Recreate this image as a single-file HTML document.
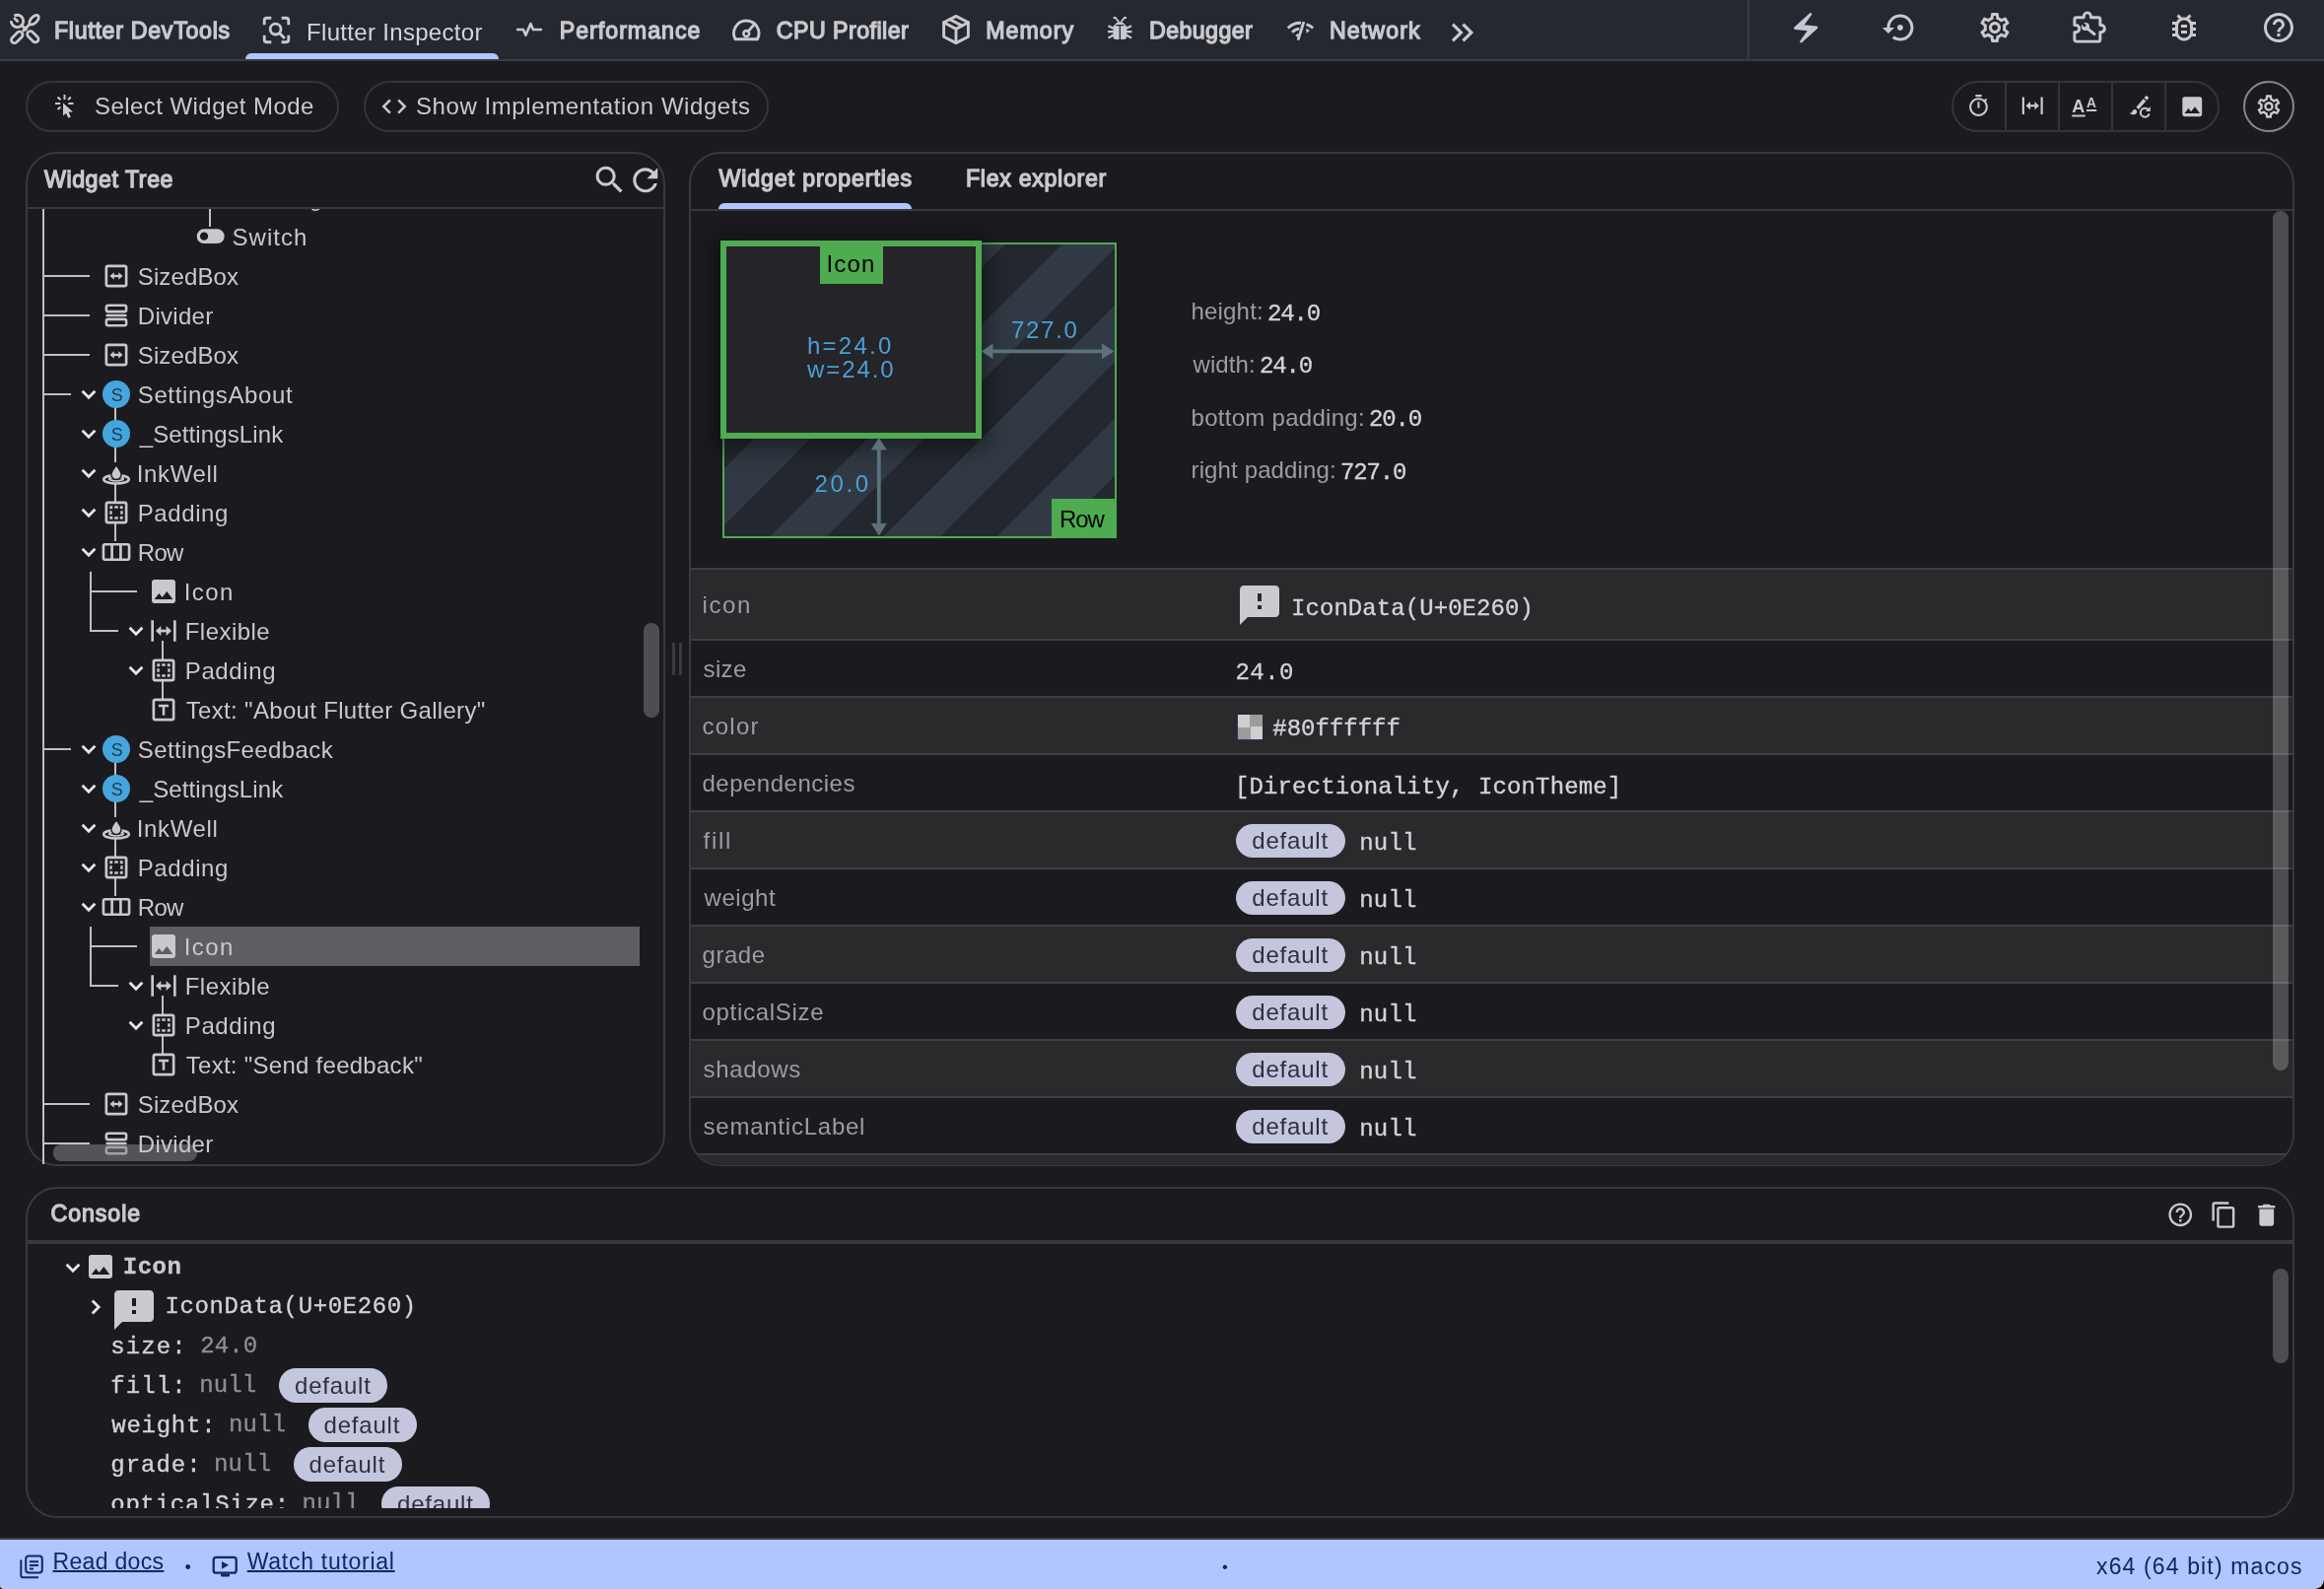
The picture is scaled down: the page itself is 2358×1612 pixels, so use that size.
<!DOCTYPE html>
<html lang="en"><head><meta charset="utf-8"><title>Flutter DevTools</title><style>
html,body{margin:0;padding:0;background:#000}
#bg{position:absolute;left:0;top:0;width:2358px;height:1612px;background:#1b1b1f;border-radius:0 0 9px 3px}
body{width:2358px;height:1612px;position:relative;overflow:hidden;font-family:"Liberation Sans", sans-serif;font-size:24px;color:#cac9ce}
#root{position:absolute;left:0;top:0;width:2358px;height:1612px;overflow:hidden;border-radius:0 0 9px 3px;will-change:transform}
.a{position:absolute}
.ic{position:absolute;overflow:visible}
.t{position:absolute;white-space:pre;line-height:24px}
.m{font-family:"Liberation Mono",monospace;-webkit-text-stroke:0.35px}
.S{width:28px;height:28px;border-radius:14px;background:#45a5dc}
</style></head><body><div id="bg"></div><div id="root"><header id="appbar"><div class="a" style="left:0px;top:0px;width:2358px;height:60px;background:#262830;"></div><div class="a" style="left:0px;top:60px;width:2358px;height:2px;background:#3a3b40;"></div><svg class="ic" style="left:8.5px;top:13.4px" width="33" height="33" viewBox="0 0 24 24"><circle cx="6.200" cy="6.100" r="4.500" fill="none" stroke="#cac9ce" stroke-width="2.100" stroke-dasharray="24 4.270" stroke-dashoffset="-18.300"/><path fill="none" stroke="#cac9ce" stroke-width="2" stroke-linecap="round" stroke-linejoin="miter" d="M6.300 6.200L4.300 4.200"/><path fill="none" stroke="#cac9ce" stroke-width="2.1" stroke-linecap="butt" stroke-linejoin="miter" d="M9.300 9l3.900 3.900"/><rect x="12.800" y="15.300" width="9.800" height="4.600" rx="2.300" fill="none" stroke="#cac9ce" stroke-width="2" transform="rotate(45 17.700 17.600)"/><ellipse cx="18.600" cy="5.200" rx="4.300" ry="2.300" fill="none" stroke="#cac9ce" stroke-width="2" transform="rotate(-45 18.600 5.200)"/><path fill="none" stroke="#cac9ce" stroke-width="2.1" stroke-linecap="butt" stroke-linejoin="miter" d="M15.600 8.200l-5.400 5.400"/><rect x="1" y="15.800" width="10" height="4.600" rx="2.300" fill="none" stroke="#cac9ce" stroke-width="2" transform="rotate(-45 6 18.100)"/></svg><div class="a" style="left:249px;top:54px;width:257px;height:6px;background:#b1c5ff;border-radius:6px 6px 0 0;"></div><svg class="ic" style="left:265px;top:14.7px" width="31" height="31" viewBox="0 0 24 24"><path fill="none" stroke="#cac9ce" stroke-width="2.2" stroke-linecap="butt" stroke-linejoin="miter" d="M2.500 8V4.500c0-1.100.900-2 2-2H8M16 2.500h3.500c1.100 0 2 .900 2 2V8M21.500 16v3.500c0 1.100-.900 2-2 2H16M8 21.500H4.500c-1.100 0-2-.900-2-2V16"/><circle cx="11.300" cy="11.300" r="4.200" fill="none" stroke="#cac9ce" stroke-width="2.200"/><path fill="none" stroke="#cac9ce" stroke-width="2.2" stroke-linecap="butt" stroke-linejoin="miter" d="M14.300 14.300l4.200 4.200"/></svg><svg class="ic" style="left:524.4px;top:16.6px" width="26" height="26" viewBox="0 0 24 24"><path fill="none" stroke="#cac9ce" stroke-width="2.4" stroke-linecap="round" stroke-linejoin="round" d="M1 12h5.400l2.300 5.300 4.600-10.800 2.300 5.500H23"/></svg><svg class="ic" style="left:742.45px;top:14.75px" width="30.5" height="30.5" viewBox="0 0 24 24"><path fill="none" stroke="#cac9ce" stroke-width="2.3" stroke-linecap="round" stroke-linejoin="round" d="M3.200 19.500a10 10 0 1 1 17.600 0z"/><circle cx="12" cy="15" r="2.300" fill="none" stroke="#cac9ce" stroke-width="2"/><path fill="none" stroke="#cac9ce" stroke-width="2.3" stroke-linecap="round" stroke-linejoin="miter" d="M13.500 13.300l3.800-4.600"/></svg><svg class="ic" style="left:953.5px;top:14.3px" width="32" height="32" viewBox="0 0 24 24"><path fill="none" stroke="#cac9ce" stroke-width="2.2" stroke-linecap="round" stroke-linejoin="round" d="M12 1.800l9.300 4.800v10.800L12 22.200l-9.300-4.800V6.600z"/><path fill="none" stroke="#cac9ce" stroke-width="2.2" stroke-linecap="round" stroke-linejoin="round" d="M2.700 6.600L12 11.500l9.300-4.900M12 11.500v10.700M7.300 4.200l9.400 4.900"/></svg><svg class="ic" style="left:1124px;top:16.8px" width="24" height="24" viewBox="0 0 24 24"><path fill="#cac9ce" d="M9 6.100h6.600l3.700 4v9.800c0 1.700-1.300 3-3 3H8.300c-1.700 0-3-1.300-3-3V10.100z"/><path fill="none" stroke="#cac9ce" stroke-width="1.8" stroke-linecap="butt" stroke-linejoin="miter" d="M7.800 1l3.800 5M16.800 1L13 6M5.600 1h2.800M16.200 1H19"/><path fill="none" stroke="#cac9ce" stroke-width="2.2" stroke-linecap="butt" stroke-linejoin="miter" d="M5.600 11.700L.500 9.200M5.600 15.200H0M5.600 18.500L.500 21.600M19 11.700l5-2.500M19 15.200h5.400M19 18.500l5 3.100"/><path stroke="#262830" stroke-width="1.300" d="M12.300 9.300v14M8.300 8.700h8" fill="none"/></svg><svg class="ic" style="left:1304.5px;top:16.5px" width="29" height="29" viewBox="0 0 24 24"><path fill="none" stroke="#cac9ce" stroke-width="2.3" stroke-linecap="butt" stroke-linejoin="miter" d="M1.500 9.500C4.500 6.300 8.500 5 12.500 5.200M5 13c1.700-1.800 3.800-2.800 6-3M8.600 16.500c.500-.600 1.100-1 1.800-1.300"/><path fill="none" stroke="#cac9ce" stroke-width="2.3" stroke-linecap="butt" stroke-linejoin="miter" d="M14.800 4.200L10 19.500"/><path fill="none" stroke="#cac9ce" stroke-width="2.3" stroke-linecap="butt" stroke-linejoin="miter" d="M17 6.300c2.100.700 4 1.800 5.500 3.200"/><path fill="#cac9ce" d="M16.800 9.800l3 1.700-2.800 2.300z"/></svg><svg class="ic" style="left:1464.5px;top:13.5px" width="38" height="38" viewBox="0 0 24 24"><path fill="#cac9ce" d="M6.41 6L5 7.41 9.58 12 5 16.59 6.410 18l6-6z"/><path fill="#cac9ce" d="M13 6l-1.41 1.41L16.17 12l-4.58 4.59L13 18l6-6z"/></svg><div class="a" style="left:1773px;top:0px;width:2px;height:60px;background:#3a3b40;"></div><svg class="ic" style="left:1813.95px;top:9.65px" width="36.5" height="36.5" viewBox="0 0 24 24"><path fill="#c3c6d4" d="M14.690 2.210L4.330 11.490c-.640.580-.280 1.650.580 1.730L13 14l-4.850 6.760c-.220.310-.190.740.080 1.010.300.300.770.310 1.080.020l10.360-9.280c.640-.580.280-1.650-.580-1.730L11 10l4.850-6.760c.220-.310.190-.740-.080-1.010-.300-.300-.770-.310-1.080-.020z"/></svg><svg class="ic" style="left:1910.3px;top:10px" width="36" height="36" viewBox="0 0 24 24"><path fill="#cac9ce" d="M14 12c0-1.1-.9-2-2-2s-2 .9-2 2 .9 2 2 2 2-.9 2-2zm-2-9c-4.97 0-9 4.03-9 9H0l4 4 4-4H5c0-3.87 3.13-7 7-7s7 3.13 7 7-3.13 7-7 7c-1.51 0-2.91-.49-4.06-1.3l-1.42 1.44C8.04 20.3 9.94 21 12 21c4.970 0 9-4.03 9-9s-4.03-9-9-9z"/></svg><svg class="ic" style="left:2006px;top:10px" width="36" height="36" viewBox="0 0 24 24"><path fill="#cac9ce" d="M19.43 12.98c.04-.32.07-.64.07-.98 0-.34-.03-.66-.07-.98l2.11-1.65c.19-.15.24-.42.12-.64l-2-3.46c-.09-.16-.26-.25-.44-.25-.06 0-.12.01-.17.03l-2.49 1c-.52-.4-1.08-.73-1.69-.98l-.38-2.65C14.46 2.18 14.25 2 14 2h-4c-.25 0-.46.18-.49.42l-.38 2.65c-.61.25-1.17.59-1.69.98l-2.49-1c-.06-.02-.12-.03-.18-.03-.17 0-.34.09-.43.25l-2 3.46c-.13.22-.07.49.12.64l2.11 1.65c-.04.32-.07.65-.07.98 0 .33.03.66.07.98l-2.11 1.65c-.19.15-.24.42-.12.64l2 3.46c.09.16.26.25.44.25.06 0 .12-.01.17-.03l2.49-1c.52.4 1.08.73 1.69.98l.38 2.65c.03.24.24.42.49.42h4c.25 0 .46-.18.49-.42l.38-2.65c.61-.25 1.17-.59 1.69-.98l2.49 1c.06.02.12.03.18.03.17 0 .34-.09.43-.25l2-3.46c.12-.22.07-.49-.12-.64l-2.11-1.65zm-1.98-1.71c.04.31.05.52.05.73 0 .21-.02.43-.05.73l-.14 1.13.89.7 1.08.84-.7 1.21-1.27-.51-1.04-.42-.9.68c-.43.32-.84.56-1.25.73l-1.06.43-.16 1.13-.2 1.35h-1.4l-.19-1.35-.16-1.13-1.06-.43c-.43-.18-.83-.41-1.23-.71l-.91-.7-1.06.43-1.27.51-.7-1.21 1.08-.84.89-.7-.14-1.13c-.03-.31-.05-.54-.05-.74s.02-.43.05-.73l.14-1.13-.89-.7-1.08-.84.7-1.21 1.27.51 1.04.42.9-.68c.43-.32.84-.56 1.25-.73l1.06-.43.16-1.13.2-1.35h1.39l.19 1.35.16 1.13 1.06.43c.43.18.83.41 1.23.71l.91.7 1.06-.43 1.27-.51.7 1.21-1.07.85-.89.7.14 1.13zM12 8c-2.21 0-4 1.79-4 4s1.79 4 4 4 4-1.79 4-4-1.79-4-4-4zm0 6c-1.1 0-2-.9-2-2s.9-2 2-2 2 .9 2 2-.9 2-2 2z"/></svg><svg class="ic" style="left:2099.7px;top:8.3px" width="39" height="39" viewBox="0 0 24 24"><path fill="none" stroke="#cac9ce" stroke-width="1.8" stroke-linecap="round" stroke-linejoin="round" d="M8.800 6V5.200a2.200 2.200 0 0 1 4.400 0V6h4.600c.700 0 1.200.500 1.200 1.200v3.600h.600a2.200 2.200 0 0 1 0 4.400H19v4.600c0 .700-.500 1.200-1.200 1.200H4.200c-.700 0-1.200-.500-1.200-1.200v-4.600h.800a2.200 2.200 0 0 0 0-4.400H3V7.200C3 6.500 3.500 6 4.200 6z"/><circle cx="9.800" cy="11.700" r="2.500" fill="#cac9ce"/><path fill="none" stroke="#cac9ce" stroke-width="1.9" stroke-linecap="round" stroke-linejoin="miter" d="M10.800 12.700l4.600 3.700"/><path d="M9.800 11.500L7.300 9" stroke="#262830" stroke-width="1.700" fill="none"/></svg><svg class="ic" style="left:2198px;top:10px" width="36" height="36" viewBox="0 0 24 24"><path fill="#cac9ce" d="M20 8h-2.81c-.45-.78-1.07-1.45-1.82-1.96L17 4.41 15.59 3l-2.17 2.17C12.96 5.06 12.49 5 12 5s-.96.06-1.41.17L8.41 3 7 4.41l1.62 1.63C7.88 6.55 7.26 7.22 6.81 8H4v2h2.090c-.05.33-.09.66-.09 1v1H4v2h2v1c0 .34.04.67.09 1H4v2h2.810c1.04 1.79 2.97 3 5.19 3s4.15-1.21 5.19-3H20v-2h-2.09c.05-.33.09-.66.09-1v-1h2v-2h-2v-1c0-.34-.04-.67-.09-1H20V8zm-4 4v3c0 .22-.03.47-.07.7l-.1.65-.37.65c-.72 1.24-2.04 2-3.46 2s-2.74-.77-3.46-2l-.37-.64-.1-.65C8.030 15.48 8 15.23 8 15v-4c0-.23.03-.48.07-.7l.1-.65.37-.65c.3-.52.72-.97 1.21-1.31l.57-.39.74-.18c.31-.08.63-.12.94-.12.32 0 .63.04.95.12l.68.16.61.42c.5.34.91.78 1.21 1.31l.38.65.1.65c.04.22.07.47.07.69v1zm-6 2h4v2h-4zm0-4h4v2h-4z"/></svg><svg class="ic" style="left:2294px;top:10px" width="36" height="36" viewBox="0 0 24 24"><path fill="#cac9ce" d="M11 18h2v-2h-2v2zm1-16C6.48 2 2 6.48 2 12s4.48 10 10 10 10-4.48 10-10S17.52 2 12 2zm0 18c-4.41 0-8-3.59-8-8s3.59-8 8-8 8 3.59 8 8-3.59 8-8 8zm0-14c-2.21 0-4 1.79-4 4h2c0-1.1.9-2 2-2s2 .9 2 2c0 2-3 1.75-3 5h2c0-2.25 3-2.5 3-5 0-2.21-1.79-4-4-4z"/></svg><span class="t" style="left:55.00px;top:19.90px;letter-spacing:0.705px;-webkit-text-stroke:1.3px #cac9ce;font-size:23.2px;line-height:23.2px;">Flutter DevTools</span><span class="t" style="left:311.00px;top:20.50px;letter-spacing:0.318px;color:#d6d5da;">Flutter Inspector</span><span class="t" style="left:567.75px;top:19.90px;letter-spacing:0.991px;-webkit-text-stroke:1.3px #cac9ce;font-size:23.2px;line-height:23.2px;">Performance</span><span class="t" style="left:787.75px;top:19.90px;letter-spacing:0.466px;-webkit-text-stroke:1.3px #cac9ce;font-size:23.2px;line-height:23.2px;">CPU Profiler</span><span class="t" style="left:1000.25px;top:19.90px;letter-spacing:1.021px;-webkit-text-stroke:1.3px #cac9ce;font-size:23.2px;line-height:23.2px;">Memory</span><span class="t" style="left:1166.00px;top:19.90px;letter-spacing:0.411px;-webkit-text-stroke:1.3px #cac9ce;font-size:23.2px;line-height:23.2px;">Debugger</span><span class="t" style="left:1349.00px;top:19.90px;letter-spacing:1.092px;-webkit-text-stroke:1.3px #cac9ce;font-size:23.2px;line-height:23.2px;">Network</span></header>
<nav id="toolbar"><div class="a" style="left:26px;top:82px;width:318px;height:52px;border:2px solid #34353b;border-radius:26px;box-sizing:border-box;"></div><svg class="ic" style="left:55.5px;top:95.5px" width="20" height="24" viewBox="0 0 20 24"><path fill="none" stroke="#cac9ce" stroke-width="2" d="M9.500 0v5M0 9.100h5.200M13.300 9.100h5.200M2.500 2.500l3 2.800M15.800 2.500l-2.800 2.800M2.500 15l3-2.600"/><path fill="#cac9ce" d="M8 8.500v13l3-2.600 2.300 4.800 2.500-1.200-2.300-4.700 4.500-.400z"/></svg><div class="a" style="left:369px;top:82px;width:411px;height:52px;border:2px solid #34353b;border-radius:26px;box-sizing:border-box;"></div><svg class="ic" style="left:385px;top:93px" width="30" height="30" viewBox="0 0 24 24"><path fill="#cac9ce" d="M9.4 16.6L4.8 12l4.6-4.6L8 6l-6 6 6 6 1.4-1.4zm5.2 0l4.6-4.6-4.6-4.6L16 6l6 6-6 6-1.400-1.400z"/></svg><div class="a" style="left:1980px;top:82px;width:272px;height:52px;border:2px solid #34353b;border-radius:26px;box-sizing:border-box;"></div><div class="a" style="left:2034px;top:84px;width:2px;height:48px;background:#34353b;"></div><div class="a" style="left:2088px;top:84px;width:2px;height:48px;background:#34353b;"></div><div class="a" style="left:2142px;top:84px;width:2px;height:48px;background:#34353b;"></div><div class="a" style="left:2196px;top:84px;width:2px;height:48px;background:#34353b;"></div><svg class="ic" style="left:1995px;top:94.5px" width="25" height="25" viewBox="0 0 24 24"><path fill="#cac9ce" d="M15 1H9v2h6V1zm-4 13h2V8h-2v6zm8.03-6.61l1.42-1.42c-.43-.51-.9-.99-1.41-1.41l-1.42 1.42C16.07 4.74 14.12 4 12 4c-4.97 0-9 4.03-9 9s4.02 9 9 9 9-4.03 9-9c0-2.12-.74-4.07-1.970-5.610zM12 20c-3.870 0-7-3.130-7-7s3.130-7 7-7 7 3.130 7 7-3.130 7-7 7z"/></svg><svg class="ic" style="left:2048.75px;top:94.25px" width="26.5" height="26.5" viewBox="0 0 24 24"><path fill="none" stroke="#cac9ce" stroke-width="2" stroke-linecap="butt" stroke-linejoin="miter" d="M3.5 4v16M20.5 4v16"/><path fill="none" stroke="#cac9ce" stroke-width="2" stroke-linecap="butt" stroke-linejoin="miter" d="M7 12h10"/><path fill="#cac9ce" d="M10 8.2L6 12l4 3.8zM14 8.200L18 12l-4 3.800z"/></svg><svg class="ic" style="left:2101px;top:91.5px" width="30" height="30" viewBox="0 0 24 24"><text x="1" y="17.500" font-family="Liberation Sans, sans-serif" font-weight="bold" font-size="14.500" fill="#cac9ce">A</text><text x="12.800" y="13.500" font-family="Liberation Sans, sans-serif" font-weight="bold" font-size="11" fill="#cac9ce">A</text><path fill="none" stroke="#cac9ce" stroke-width="1.6" stroke-linecap="butt" stroke-linejoin="miter" d="M1 20.300h10.800M12.800 16h8.200"/></svg><svg class="ic" style="left:2156.5px;top:93.5px" width="27" height="27" viewBox="0 0 24 24"><path fill="#cac9ce" d="M3 18.500c1.700 0 2.400-.700 2.800-1.700.500-1.300 1.500-2 2.700-1.600 1.200.400 1.700 1.500 1.300 2.700-.700 2-3 2.800-6.800.600zM9.300 13.200l6.400-7.700 2.400 2-6.600 7.600z M16.500 4.700l1.300-1.500c.400-.400 1-.500 1.400-.100l.900.800c.400.400.500 1 .100 1.400l-1.300 1.500z"/><path fill="none" stroke="#cac9ce" stroke-width="1.8" stroke-linecap="butt" stroke-linejoin="miter" d="M20.300 15.500a4 4 0 1 0 .700 3.500"/><path fill="#cac9ce" d="M22 12.500v4.300h-4.300z"/></svg><svg class="ic" style="left:2210.75px;top:94.55px" width="26.5" height="26.5" viewBox="0 0 24 24"><path fill="#cac9ce" d="M21 19V5c0-1.1-.9-2-2-2H5c-1.1 0-2 .9-2 2v14c0 1.1.9 2 2 2h14c1.1 0 2-.9 2-2zM8.5 13.5l2.5 3.01L14.5 12l4.5 6H5l3.5-4.5z"/></svg><div class="a" style="left:2276px;top:82px;width:52px;height:52px;border:2px solid #85858b;border-radius:26px;box-sizing:border-box;"></div><svg class="ic" style="left:2288px;top:94px" width="28" height="28" viewBox="0 0 24 24"><path fill="#cac9ce" d="M19.43 12.98c.04-.32.07-.64.07-.98 0-.34-.03-.66-.07-.98l2.11-1.65c.19-.15.24-.42.12-.64l-2-3.46c-.09-.16-.26-.25-.44-.25-.06 0-.12.01-.17.03l-2.49 1c-.52-.4-1.08-.73-1.69-.98l-.38-2.65C14.46 2.18 14.25 2 14 2h-4c-.25 0-.46.18-.49.42l-.38 2.65c-.61.25-1.17.59-1.69.98l-2.49-1c-.06-.02-.12-.03-.18-.03-.17 0-.34.09-.43.25l-2 3.46c-.13.22-.07.49.12.64l2.11 1.65c-.04.32-.07.65-.07.98 0 .33.03.66.07.98l-2.11 1.65c-.19.15-.24.42-.12.64l2 3.46c.09.16.26.25.44.25.06 0 .12-.01.17-.03l2.49-1c.52.4 1.08.73 1.69.98l.38 2.65c.03.24.24.42.49.42h4c.25 0 .46-.18.49-.42l.38-2.65c.61-.25 1.17-.59 1.69-.98l2.49 1c.06.02.12.03.18.03.17 0 .34-.09.43-.25l2-3.46c.12-.22.07-.49-.12-.64l-2.11-1.65zm-1.98-1.71c.04.31.05.52.05.73 0 .21-.02.43-.05.73l-.14 1.13.89.7 1.08.84-.7 1.21-1.27-.51-1.04-.42-.9.68c-.43.32-.84.56-1.25.73l-1.06.43-.16 1.13-.2 1.35h-1.4l-.19-1.35-.16-1.13-1.06-.43c-.43-.18-.83-.41-1.23-.71l-.91-.7-1.06.43-1.27.51-.7-1.21 1.08-.84.89-.7-.14-1.13c-.03-.31-.05-.54-.05-.74s.02-.43.05-.73l.14-1.13-.89-.7-1.08-.84.7-1.21 1.27.51 1.04.42.9-.68c.43-.32.84-.56 1.25-.73l1.06-.43.16-1.13.2-1.35h1.39l.19 1.35.16 1.13 1.06.43c.43.18.83.41 1.23.71l.91.7 1.06-.43 1.27-.51.7 1.21-1.07.85-.89.7.14 1.13zM12 8c-2.21 0-4 1.79-4 4s1.79 4 4 4 4-1.79 4-4-1.79-4-4-4zm0 6c-1.1 0-2-.9-2-2s.9-2 2-2 2 .9 2 2-.9 2-2 2z"/></svg><span class="t" style="left:96.00px;top:96.00px;letter-spacing:0.446px;">Select Widget Mode</span><span class="t" style="left:422.00px;top:96.00px;letter-spacing:0.571px;">Show Implementation Widgets</span></nav>
<div id="panels"><div class="a" style="left:26px;top:154px;width:649px;height:1029px;border:2px solid #39393d;border-radius:32px;box-sizing:border-box;"></div><div class="a" style="left:699px;top:154px;width:1629px;height:1029px;border:2px solid #39393d;border-radius:32px;box-sizing:border-box;"></div><div class="a" style="left:26px;top:1204px;width:2302px;height:335.5px;border:2px solid #39393d;border-radius:32px;box-sizing:border-box;"></div><div class="a" style="left:681.5px;top:652px;width:3.5px;height:33px;background:#3a3a3f;"></div><div class="a" style="left:688.5px;top:652px;width:3.5px;height:33px;background:#3a3a3f;"></div></div>
<section id="widget-tree"><svg class="ic" style="left:600px;top:164px" width="37" height="37" viewBox="0 0 24 24"><path fill="#cac9ce" d="M15.5 14h-.79l-.28-.27C15.41 12.59 16 11.11 16 9.5 16 5.91 13.09 3 9.5 3S3 5.91 3 9.5 5.91 16 9.5 16c1.61 0 3.09-.59 4.23-1.57l.27.28v.79l5 4.99L20.49 19l-4.99-5zm-6 0C7.01 14 5 11.99 5 9.5S7.01 5 9.5 5 14 7.01 14 9.5 11.99 14 9.5 14z"/></svg><svg class="ic" style="left:636.25px;top:164.25px" width="37.5" height="37.5" viewBox="0 0 24 24"><path fill="#cac9ce" d="M17.65 6.35C16.2 4.9 14.21 4 12 4c-4.42 0-7.99 3.58-7.99 8s3.57 8 7.99 8c3.73 0 6.84-2.55 7.73-6h-2.08c-.82 2.33-3.04 4-5.65 4-3.31 0-6-2.69-6-6s2.69-6 6-6c1.66 0 3.14.69 4.22 1.78L13 11h7V4l-2.35 2.35z"/></svg><div class="a" style="left:28px;top:210px;width:645px;height:2px;background:#39393d;"></div><div class="a" id="tree" style="left:0;top:212px;width:673px;height:969px;overflow:hidden"><div class="a" style="left:152px;top:728px;width:497px;height:40px;background:#5e5d63"></div><div class="a" style="left:43px;top:0px;width:2px;height:969px;background:#c0bfc4"></div><div class="a" style="left:212px;top:0px;width:2px;height:18px;background:#c0bfc4"></div><div class="a" style="left:45px;top:67px;width:46px;height:2px;background:#c0bfc4"></div><div class="a" style="left:45px;top:107px;width:46px;height:2px;background:#c0bfc4"></div><div class="a" style="left:45px;top:147px;width:46px;height:2px;background:#c0bfc4"></div><div class="a" style="left:45px;top:907px;width:46px;height:2px;background:#c0bfc4"></div><div class="a" style="left:45px;top:947px;width:46px;height:2px;background:#c0bfc4"></div><div class="a" style="left:45px;top:187px;width:27px;height:2px;background:#c0bfc4"></div><div class="a" style="left:45px;top:547px;width:27px;height:2px;background:#c0bfc4"></div><div class="a" style="left:116px;top:198px;width:2px;height:19px;background:#c0bfc4"></div><div class="a" style="left:116px;top:238px;width:2px;height:19px;background:#c0bfc4"></div><div class="a" style="left:116px;top:278px;width:2px;height:19px;background:#c0bfc4"></div><div class="a" style="left:116px;top:318px;width:2px;height:19px;background:#c0bfc4"></div><div class="a" style="left:116px;top:558px;width:2px;height:19px;background:#c0bfc4"></div><div class="a" style="left:116px;top:598px;width:2px;height:19px;background:#c0bfc4"></div><div class="a" style="left:116px;top:638px;width:2px;height:19px;background:#c0bfc4"></div><div class="a" style="left:116px;top:678px;width:2px;height:19px;background:#c0bfc4"></div><div class="a" style="left:164px;top:438px;width:2px;height:19px;background:#c0bfc4"></div><div class="a" style="left:164px;top:478px;width:2px;height:19px;background:#c0bfc4"></div><div class="a" style="left:164px;top:798px;width:2px;height:19px;background:#c0bfc4"></div><div class="a" style="left:164px;top:838px;width:2px;height:19px;background:#c0bfc4"></div><div class="a" style="left:91px;top:368px;width:2px;height:61px;background:#c0bfc4"></div><div class="a" style="left:91px;top:387px;width:48px;height:2px;background:#c0bfc4"></div><div class="a" style="left:91px;top:427px;width:29px;height:2px;background:#c0bfc4"></div><div class="a" style="left:91px;top:728px;width:2px;height:61px;background:#c0bfc4"></div><div class="a" style="left:91px;top:747px;width:48px;height:2px;background:#c0bfc4"></div><div class="a" style="left:91px;top:787px;width:29px;height:2px;background:#c0bfc4"></div><svg class="ic" style="left:196.3px;top:10.3px" width="35.4" height="35.4" viewBox="0 0 24 24"><path fill="#c9c8cd" d="M7.500 7h9a5 5 0 0 1 0 10h-9a5 5 0 0 1 0-10zm0 2.200a2.800 2.800 0 1 0 0 5.600 2.800 2.800 0 0 0 0-5.600z"/></svg><svg class="ic" style="left:102px;top:52px" width="32" height="32" viewBox="0 0 24 24"><rect x="4.400" y="4.400" width="15.200" height="15.200" rx="1.300" fill="none" stroke="#c9c8cd" stroke-width="2"/><path fill="none" stroke="#c9c8cd" stroke-width="1.8" stroke-linecap="butt" stroke-linejoin="miter" d="M9 12h6"/><path fill="#c9c8cd" d="M10.300 9.100L7.100 12l3.200 2.900zM13.700 9.100l3.200 2.900-3.200 2.900z"/></svg><svg class="ic" style="left:102px;top:92px" width="32" height="32" viewBox="0 0 24 24"><rect x="4.400" y="4.300" width="15.200" height="4.800" rx="1.300" fill="none" stroke="#c9c8cd" stroke-width="1.900"/><rect x="4.400" y="14.900" width="15.200" height="4.800" rx="1.300" fill="none" stroke="#c9c8cd" stroke-width="1.900"/><path fill="none" stroke="#c9c8cd" stroke-width="2" stroke-linecap="round" stroke-linejoin="miter" d="M5 12h14"/></svg><svg class="ic" style="left:102px;top:132px" width="32" height="32" viewBox="0 0 24 24"><rect x="4.400" y="4.400" width="15.200" height="15.200" rx="1.300" fill="none" stroke="#c9c8cd" stroke-width="2"/><path fill="none" stroke="#c9c8cd" stroke-width="1.8" stroke-linecap="butt" stroke-linejoin="miter" d="M9 12h6"/><path fill="#c9c8cd" d="M10.300 9.100L7.100 12l3.200 2.900zM13.700 9.100l3.200 2.900-3.200 2.900z"/></svg><div class="a S" style="left:104px;top:174px"></div><svg class="ic" style="left:76px;top:173.7px" width="28" height="28" viewBox="0 0 24 24"><path fill="none" stroke="#e6e5ea" stroke-width="2.4" stroke-linecap="butt" stroke-linejoin="miter" d="M6.500 9.200l5.500 5.500 5.500-5.500"/></svg><div class="a S" style="left:104px;top:214px"></div><svg class="ic" style="left:76px;top:213.7px" width="28" height="28" viewBox="0 0 24 24"><path fill="none" stroke="#e6e5ea" stroke-width="2.4" stroke-linecap="butt" stroke-linejoin="miter" d="M6.500 9.200l5.500 5.500 5.500-5.500"/></svg><svg class="ic" style="left:102px;top:252px" width="32" height="32" viewBox="0 0 24 24"><ellipse cx="12" cy="16.700" rx="9.600" ry="3.200" fill="none" stroke="#c9c8cd" stroke-width="1.900"/><ellipse cx="12" cy="16.400" rx="5.400" ry="1.400" fill="none" stroke="#c9c8cd" stroke-width="1.400"/><path fill="#c9c8cd" stroke="#1b1b1f" stroke-width="1.100" d="M12 5.800C13.800 8.600 15.800 10.900 15.800 13a3.800 3.800 0 0 1-7.600 0C8.200 10.900 10.200 8.600 12 5.800z"/></svg><svg class="ic" style="left:76px;top:253.7px" width="28" height="28" viewBox="0 0 24 24"><path fill="none" stroke="#e6e5ea" stroke-width="2.4" stroke-linecap="butt" stroke-linejoin="miter" d="M6.500 9.200l5.500 5.500 5.500-5.500"/></svg><svg class="ic" style="left:102px;top:292px" width="32" height="32" viewBox="0 0 24 24"><rect x="4.400" y="4.400" width="15.200" height="15.200" rx="1.300" fill="none" stroke="#c9c8cd" stroke-width="2"/><path fill="none" stroke="#c9c8cd" stroke-width="1.800" stroke-dasharray="2.600 1.500" stroke-dashoffset="1.3" d="M7.900 7.900h8.200v8.200H7.900z"/></svg><svg class="ic" style="left:76px;top:293.7px" width="28" height="28" viewBox="0 0 24 24"><path fill="none" stroke="#e6e5ea" stroke-width="2.4" stroke-linecap="butt" stroke-linejoin="miter" d="M6.500 9.200l5.500 5.500 5.500-5.500"/></svg><svg class="ic" style="left:102px;top:332px" width="32" height="32" viewBox="0 0 24 24"><rect x="2.200" y="6.200" width="19.600" height="11.600" rx="1.300" fill="none" stroke="#c9c8cd" stroke-width="2"/><path fill="none" stroke="#c9c8cd" stroke-width="2" stroke-linecap="butt" stroke-linejoin="miter" d="M8.700 6v12M15.300 6v12"/></svg><svg class="ic" style="left:76px;top:333.7px" width="28" height="28" viewBox="0 0 24 24"><path fill="none" stroke="#e6e5ea" stroke-width="2.4" stroke-linecap="butt" stroke-linejoin="miter" d="M6.500 9.200l5.500 5.500 5.500-5.500"/></svg><svg class="ic" style="left:150px;top:372px" width="32" height="32" viewBox="0 0 24 24"><path fill="#c9c8cd" d="M21 19V5c0-1.1-.9-2-2-2H5c-1.1 0-2 .9-2 2v14c0 1.1.9 2 2 2h14c1.1 0 2-.9 2-2zM8.5 13.5l2.5 3.01L14.5 12l4.5 6H5l3.5-4.5z"/></svg><svg class="ic" style="left:150px;top:412px" width="32" height="32" viewBox="0 0 24 24"><path fill="none" stroke="#c9c8cd" stroke-width="2" stroke-linecap="butt" stroke-linejoin="miter" d="M3.5 4v16M20.5 4v16"/><path fill="none" stroke="#c9c8cd" stroke-width="2" stroke-linecap="butt" stroke-linejoin="miter" d="M7 12h10"/><path fill="#c9c8cd" d="M10 8.2L6 12l4 3.8zM14 8.200L18 12l-4 3.800z"/></svg><svg class="ic" style="left:124px;top:413.7px" width="28" height="28" viewBox="0 0 24 24"><path fill="none" stroke="#e6e5ea" stroke-width="2.4" stroke-linecap="butt" stroke-linejoin="miter" d="M6.500 9.200l5.500 5.500 5.500-5.500"/></svg><svg class="ic" style="left:150px;top:452px" width="32" height="32" viewBox="0 0 24 24"><rect x="4.400" y="4.400" width="15.200" height="15.200" rx="1.300" fill="none" stroke="#c9c8cd" stroke-width="2"/><path fill="none" stroke="#c9c8cd" stroke-width="1.800" stroke-dasharray="2.600 1.500" stroke-dashoffset="1.3" d="M7.900 7.900h8.200v8.200H7.900z"/></svg><svg class="ic" style="left:124px;top:453.7px" width="28" height="28" viewBox="0 0 24 24"><path fill="none" stroke="#e6e5ea" stroke-width="2.4" stroke-linecap="butt" stroke-linejoin="miter" d="M6.500 9.200l5.500 5.500 5.500-5.500"/></svg><svg class="ic" style="left:150px;top:492px" width="32" height="32" viewBox="0 0 24 24"><rect x="4.400" y="4.400" width="15.200" height="15.200" rx="1.300" fill="none" stroke="#c9c8cd" stroke-width="2"/><path fill="#c9c8cd" d="M8.200 8h7.600v1.900h-2.850V16.300h-1.900V9.900H8.200z"/></svg><div class="a S" style="left:104px;top:534px"></div><svg class="ic" style="left:76px;top:533.7px" width="28" height="28" viewBox="0 0 24 24"><path fill="none" stroke="#e6e5ea" stroke-width="2.4" stroke-linecap="butt" stroke-linejoin="miter" d="M6.500 9.200l5.500 5.500 5.500-5.500"/></svg><div class="a S" style="left:104px;top:574px"></div><svg class="ic" style="left:76px;top:573.7px" width="28" height="28" viewBox="0 0 24 24"><path fill="none" stroke="#e6e5ea" stroke-width="2.4" stroke-linecap="butt" stroke-linejoin="miter" d="M6.500 9.200l5.500 5.500 5.500-5.500"/></svg><svg class="ic" style="left:102px;top:612px" width="32" height="32" viewBox="0 0 24 24"><ellipse cx="12" cy="16.700" rx="9.600" ry="3.200" fill="none" stroke="#c9c8cd" stroke-width="1.900"/><ellipse cx="12" cy="16.400" rx="5.400" ry="1.400" fill="none" stroke="#c9c8cd" stroke-width="1.400"/><path fill="#c9c8cd" stroke="#1b1b1f" stroke-width="1.100" d="M12 5.800C13.800 8.600 15.800 10.900 15.800 13a3.800 3.800 0 0 1-7.600 0C8.200 10.900 10.200 8.600 12 5.800z"/></svg><svg class="ic" style="left:76px;top:613.7px" width="28" height="28" viewBox="0 0 24 24"><path fill="none" stroke="#e6e5ea" stroke-width="2.4" stroke-linecap="butt" stroke-linejoin="miter" d="M6.500 9.200l5.500 5.500 5.500-5.500"/></svg><svg class="ic" style="left:102px;top:652px" width="32" height="32" viewBox="0 0 24 24"><rect x="4.400" y="4.400" width="15.200" height="15.200" rx="1.300" fill="none" stroke="#c9c8cd" stroke-width="2"/><path fill="none" stroke="#c9c8cd" stroke-width="1.800" stroke-dasharray="2.600 1.500" stroke-dashoffset="1.3" d="M7.900 7.900h8.200v8.200H7.900z"/></svg><svg class="ic" style="left:76px;top:653.7px" width="28" height="28" viewBox="0 0 24 24"><path fill="none" stroke="#e6e5ea" stroke-width="2.4" stroke-linecap="butt" stroke-linejoin="miter" d="M6.500 9.200l5.500 5.500 5.500-5.500"/></svg><svg class="ic" style="left:102px;top:692px" width="32" height="32" viewBox="0 0 24 24"><rect x="2.200" y="6.200" width="19.600" height="11.600" rx="1.300" fill="none" stroke="#c9c8cd" stroke-width="2"/><path fill="none" stroke="#c9c8cd" stroke-width="2" stroke-linecap="butt" stroke-linejoin="miter" d="M8.700 6v12M15.300 6v12"/></svg><svg class="ic" style="left:76px;top:693.7px" width="28" height="28" viewBox="0 0 24 24"><path fill="none" stroke="#e6e5ea" stroke-width="2.4" stroke-linecap="butt" stroke-linejoin="miter" d="M6.500 9.200l5.500 5.500 5.500-5.500"/></svg><svg class="ic" style="left:150px;top:732px" width="32" height="32" viewBox="0 0 24 24"><path fill="#c9c8cd" d="M21 19V5c0-1.1-.9-2-2-2H5c-1.1 0-2 .9-2 2v14c0 1.1.9 2 2 2h14c1.1 0 2-.9 2-2zM8.5 13.5l2.5 3.01L14.5 12l4.5 6H5l3.5-4.5z"/></svg><svg class="ic" style="left:150px;top:772px" width="32" height="32" viewBox="0 0 24 24"><path fill="none" stroke="#c9c8cd" stroke-width="2" stroke-linecap="butt" stroke-linejoin="miter" d="M3.5 4v16M20.5 4v16"/><path fill="none" stroke="#c9c8cd" stroke-width="2" stroke-linecap="butt" stroke-linejoin="miter" d="M7 12h10"/><path fill="#c9c8cd" d="M10 8.2L6 12l4 3.8zM14 8.200L18 12l-4 3.800z"/></svg><svg class="ic" style="left:124px;top:773.7px" width="28" height="28" viewBox="0 0 24 24"><path fill="none" stroke="#e6e5ea" stroke-width="2.4" stroke-linecap="butt" stroke-linejoin="miter" d="M6.500 9.200l5.500 5.500 5.500-5.500"/></svg><svg class="ic" style="left:150px;top:812px" width="32" height="32" viewBox="0 0 24 24"><rect x="4.400" y="4.400" width="15.200" height="15.200" rx="1.300" fill="none" stroke="#c9c8cd" stroke-width="2"/><path fill="none" stroke="#c9c8cd" stroke-width="1.800" stroke-dasharray="2.600 1.500" stroke-dashoffset="1.3" d="M7.900 7.900h8.200v8.200H7.900z"/></svg><svg class="ic" style="left:124px;top:813.7px" width="28" height="28" viewBox="0 0 24 24"><path fill="none" stroke="#e6e5ea" stroke-width="2.4" stroke-linecap="butt" stroke-linejoin="miter" d="M6.500 9.200l5.500 5.500 5.500-5.500"/></svg><svg class="ic" style="left:150px;top:852px" width="32" height="32" viewBox="0 0 24 24"><rect x="4.400" y="4.400" width="15.200" height="15.200" rx="1.300" fill="none" stroke="#c9c8cd" stroke-width="2"/><path fill="#c9c8cd" d="M8.200 8h7.600v1.900h-2.850V16.300h-1.900V9.900H8.200z"/></svg><svg class="ic" style="left:102px;top:892px" width="32" height="32" viewBox="0 0 24 24"><rect x="4.400" y="4.400" width="15.200" height="15.200" rx="1.300" fill="none" stroke="#c9c8cd" stroke-width="2"/><path fill="none" stroke="#c9c8cd" stroke-width="1.8" stroke-linecap="butt" stroke-linejoin="miter" d="M9 12h6"/><path fill="#c9c8cd" d="M10.300 9.100L7.100 12l3.200 2.900zM13.700 9.100l3.200 2.900-3.200 2.900z"/></svg><svg class="ic" style="left:102px;top:932px" width="32" height="32" viewBox="0 0 24 24"><rect x="4.400" y="4.300" width="15.200" height="4.800" rx="1.300" fill="none" stroke="#c9c8cd" stroke-width="1.900"/><rect x="4.400" y="14.900" width="15.200" height="4.800" rx="1.300" fill="none" stroke="#c9c8cd" stroke-width="1.900"/><path fill="none" stroke="#c9c8cd" stroke-width="2" stroke-linecap="round" stroke-linejoin="miter" d="M5 12h14"/></svg><div class="a" style="left:652.5px;top:419.5px;width:16px;height:96px;background:#4e4d53;border-radius:8px"></div><div class="a" style="left:54px;top:949px;width:146px;height:16.5px;background:rgba(130,129,136,0.55);border-radius:8px"></div><span class="t" style="left:235.50px;top:16.70px;letter-spacing:1.032px;color:#c9c8cd;">Switch</span><span class="t" style="left:139.75px;top:56.70px;letter-spacing:0.123px;color:#c9c8cd;">SizedBox</span><span class="t" style="left:139.75px;top:96.70px;letter-spacing:0.301px;color:#c9c8cd;">Divider</span><span class="t" style="left:139.75px;top:136.70px;letter-spacing:0.123px;color:#c9c8cd;">SizedBox</span><span class="t" style="left:139.75px;top:176.70px;letter-spacing:0.623px;color:#c9c8cd;">SettingsAbout</span><span class="t" style="left:112.80px;top:179.60px;letter-spacing:0.000px;font-size:18px;line-height:18px;color:#1c394c;">S</span><span class="t" style="left:141.75px;top:216.70px;letter-spacing:0.117px;color:#c9c8cd;">_SettingsLink</span><span class="t" style="left:112.80px;top:219.60px;letter-spacing:0.000px;font-size:18px;line-height:18px;color:#1c394c;">S</span><span class="t" style="left:138.75px;top:256.70px;letter-spacing:0.639px;color:#c9c8cd;">InkWell</span><span class="t" style="left:139.75px;top:296.70px;letter-spacing:0.587px;color:#c9c8cd;">Padding</span><span class="t" style="left:139.75px;top:336.70px;letter-spacing:-0.690px;color:#c9c8cd;">Row</span><span class="t" style="left:186.75px;top:376.70px;letter-spacing:1.395px;color:#c9c8cd;">Icon</span><span class="t" style="left:187.75px;top:416.70px;letter-spacing:0.464px;color:#c9c8cd;">Flexible</span><span class="t" style="left:187.75px;top:456.70px;letter-spacing:0.628px;color:#c9c8cd;">Padding</span><span class="t" style="left:188.75px;top:496.70px;letter-spacing:0.323px;color:#c9c8cd;">Text: &quot;About Flutter Gallery&quot;</span><span class="t" style="left:139.75px;top:536.70px;letter-spacing:0.386px;color:#c9c8cd;">SettingsFeedback</span><span class="t" style="left:112.80px;top:539.60px;letter-spacing:0.000px;font-size:18px;line-height:18px;color:#1c394c;">S</span><span class="t" style="left:141.75px;top:576.70px;letter-spacing:0.117px;color:#c9c8cd;">_SettingsLink</span><span class="t" style="left:112.80px;top:579.60px;letter-spacing:0.000px;font-size:18px;line-height:18px;color:#1c394c;">S</span><span class="t" style="left:138.75px;top:616.70px;letter-spacing:0.639px;color:#c9c8cd;">InkWell</span><span class="t" style="left:139.75px;top:656.70px;letter-spacing:0.587px;color:#c9c8cd;">Padding</span><span class="t" style="left:139.75px;top:696.70px;letter-spacing:-0.690px;color:#c9c8cd;">Row</span><span class="t" style="left:186.75px;top:736.70px;letter-spacing:1.395px;color:#c9c8cd;">Icon</span><span class="t" style="left:187.75px;top:776.70px;letter-spacing:0.464px;color:#c9c8cd;">Flexible</span><span class="t" style="left:187.75px;top:816.70px;letter-spacing:0.628px;color:#c9c8cd;">Padding</span><span class="t" style="left:188.75px;top:856.70px;letter-spacing:0.270px;color:#c9c8cd;">Text: &quot;Send feedback&quot;</span><span class="t" style="left:139.75px;top:896.70px;letter-spacing:0.123px;color:#c9c8cd;">SizedBox</span><span class="t" style="left:139.75px;top:936.70px;letter-spacing:0.301px;color:#c9c8cd;">Divider</span><span class="t" style="left:235.50px;top:-22.80px;letter-spacing:0.587px;color:#c9c8cd;">Padding</span></div><span class="t" style="left:45.00px;top:171.40px;letter-spacing:0.547px;-webkit-text-stroke:1.3px #cac9ce;font-size:23.2px;line-height:23.2px;">Widget Tree</span></section>
<section id="details"><div class="a" style="left:728.5px;top:206px;width:196.5px;height:6px;background:#b1c5ff;border-radius:6px 6px 0 0;"></div><div class="a" style="left:701px;top:212px;width:1625px;height:2px;background:#39393d;"></div><div class="a" style="left:732.5px;top:246px;width:400.5px;height:299.5px;box-sizing:border-box;border:2.5px solid #4fab50;background:repeating-linear-gradient(135deg,#313a44 0,#313a44 37.9px,#23282e 38.7px,#23282e 78.7px,#313a44 79.5px,#313a44 81.5px)"></div><div class="a" style="left:731px;top:244px;width:265px;height:200.5px;box-sizing:border-box;border:6px solid #4fab50;background:#252429;box-shadow:0 4px 22px 6px rgba(0,0,0,.45)"></div><div class="a" style="left:831.5px;top:246px;width:64px;height:42px;background:#4fab50;"></div><div class="a" style="left:1066.75px;top:506px;width:64px;height:37.5px;background:#4fab50;"></div><svg class="ic" style="left:996px;top:344px" width="136" height="24" viewBox="0 0 136 24"><path d="M8 12.400h118" stroke="#5b717b" stroke-width="3.800"/><path fill="#5b717b" d="M0 12.400l11.500-7.800v15.600zM134.500 12.400l-12.500-7.800v15.600z"/></svg><svg class="ic" style="left:880px;top:444px" width="24" height="100" viewBox="0 0 24 100"><path d="M11.800 8v84" stroke="#5b717b" stroke-width="3.800"/><path fill="#5b717b" d="M11.800 0l8 12.500h-16zM11.800 99.500l8-12.500h-16z"/></svg><div class="a" style="left:701px;top:214px;width:1625px;height:967.5px;overflow:hidden;border-radius:0 0 30px 30px"><div class="a" style="left:0px;top:364px;width:1625px;height:70px;background:#2a2a2d"></div><div class="a" style="left:0px;top:494px;width:1625px;height:56px;background:#2a2a2d"></div><div class="a" style="left:0px;top:610px;width:1625px;height:56px;background:#2a2a2d"></div><div class="a" style="left:0px;top:726px;width:1625px;height:56px;background:#2a2a2d"></div><div class="a" style="left:0px;top:842px;width:1625px;height:56px;background:#2a2a2d"></div><div class="a" style="left:0px;top:958px;width:1625px;height:12px;background:#2a2a2d"></div><div class="a" style="left:0px;top:362px;width:1625px;height:2px;background:#3f3f43"></div><div class="a" style="left:0px;top:434px;width:1625px;height:2px;background:#3f3f43"></div><div class="a" style="left:0px;top:492px;width:1625px;height:2px;background:#3f3f43"></div><div class="a" style="left:0px;top:550px;width:1625px;height:2px;background:#3f3f43"></div><div class="a" style="left:0px;top:608px;width:1625px;height:2px;background:#3f3f43"></div><div class="a" style="left:0px;top:666px;width:1625px;height:2px;background:#3f3f43"></div><div class="a" style="left:0px;top:724px;width:1625px;height:2px;background:#3f3f43"></div><div class="a" style="left:0px;top:782px;width:1625px;height:2px;background:#3f3f43"></div><div class="a" style="left:0px;top:840px;width:1625px;height:2px;background:#3f3f43"></div><div class="a" style="left:0px;top:898px;width:1625px;height:2px;background:#3f3f43"></div><div class="a" style="left:0px;top:956px;width:1625px;height:2px;background:#3f3f43"></div></div><svg class="ic" style="left:1254.25px;top:589.75px" width="48" height="48" viewBox="0 0 24 24"><path fill="#cbcacf" d="M20 2H4c-1.1 0-1.99.9-1.99 2L2 22l4-4h14c1.1 0 2-.9 2-2V4c0-1.1-.9-2-2-2zm-7 12h-2v-2h2v2zm0-4h-2V6h2v4z"/></svg><div class="a" style="left:1256px;top:725px;width:24.5px;height:24.5px;background:conic-gradient(#9b9b9b 0 25%,#cfcfcf 0 50%,#9b9b9b 0 75%,#cfcfcf 0);box-shadow:-1px 1px 0 #24386a"></div><div class="a" style="left:1254.25px;top:835.5px;width:110.25px;height:34.5px;background:#c3c6dd;border-radius:17.25px;"></div><div class="a" style="left:1254.25px;top:893.5px;width:110.25px;height:34.5px;background:#c3c6dd;border-radius:17.25px;"></div><div class="a" style="left:1254.25px;top:951.5px;width:110.25px;height:34.5px;background:#c3c6dd;border-radius:17.25px;"></div><div class="a" style="left:1254.25px;top:1009.5px;width:110.25px;height:34.5px;background:#c3c6dd;border-radius:17.25px;"></div><div class="a" style="left:1254.25px;top:1067.5px;width:110.25px;height:34.5px;background:#c3c6dd;border-radius:17.25px;"></div><div class="a" style="left:1254.25px;top:1125.5px;width:110.25px;height:34.5px;background:#c3c6dd;border-radius:17.25px;"></div><div class="a" style="left:2306px;top:214px;width:16px;height:872px;background:rgba(255,255,255,0.225);border-radius:8px;"></div><span class="t" style="left:729.50px;top:170.40px;letter-spacing:0.867px;-webkit-text-stroke:1.3px #cac9ce;font-size:23.2px;line-height:23.2px;">Widget properties</span><span class="t" style="left:980.00px;top:170.40px;letter-spacing:0.684px;-webkit-text-stroke:1.3px #cac9ce;font-size:23.2px;line-height:23.2px;">Flex explorer</span><span class="t" style="left:838.50px;top:255.75px;letter-spacing:1.161px;color:#000;">Icon</span><span class="t" style="left:819.00px;top:339.00px;letter-spacing:2.255px;color:#4b9fd5;">h=24.0</span><span class="t" style="left:819.00px;top:362.50px;letter-spacing:1.908px;color:#4b9fd5;">w=24.0</span><span class="t" style="left:1026.00px;top:323.25px;letter-spacing:1.697px;color:#4b9fd5;">727.0</span><span class="t" style="left:826.50px;top:479.00px;letter-spacing:2.629px;color:#4b9fd5;">20.0</span><span class="t" style="left:1075.00px;top:515.00px;letter-spacing:-1.090px;color:#000;">Row</span><span class="t" style="left:1208.50px;top:304.00px;letter-spacing:0.185px;color:#9d9ca2;">height:</span><span class="t m" style="left:1286.00px;top:306.50px;letter-spacing:-1.152px;color:#d3d2d7;">24.0</span><span class="t" style="left:1210.50px;top:357.80px;letter-spacing:0.095px;color:#9d9ca2;">width:</span><span class="t m" style="left:1278.00px;top:360.30px;letter-spacing:-1.152px;color:#d3d2d7;">24.0</span><span class="t" style="left:1208.50px;top:411.60px;letter-spacing:0.289px;color:#9d9ca2;">bottom padding:</span><span class="t m" style="left:1389.00px;top:414.10px;letter-spacing:-1.152px;color:#d3d2d7;">20.0</span><span class="t" style="left:1208.50px;top:465.40px;letter-spacing:0.133px;color:#9d9ca2;">right padding:</span><span class="t m" style="left:1360.00px;top:467.90px;letter-spacing:-1.152px;color:#d3d2d7;">727.0</span><span class="t" style="left:712.50px;top:602.00px;letter-spacing:1.607px;color:#9d9ca2;">icon</span><span class="t" style="left:713.50px;top:667.00px;letter-spacing:0.389px;color:#9d9ca2;">size</span><span class="t" style="left:712.50px;top:725.00px;letter-spacing:1.243px;color:#9d9ca2;">color</span><span class="t" style="left:712.50px;top:783.00px;letter-spacing:0.494px;color:#9d9ca2;">dependencies</span><span class="t" style="left:713.50px;top:841.00px;letter-spacing:1.723px;color:#9d9ca2;">fill</span><span class="t" style="left:714.50px;top:899.00px;letter-spacing:0.559px;color:#9d9ca2;">weight</span><span class="t" style="left:712.50px;top:957.00px;letter-spacing:0.541px;color:#9d9ca2;">grade</span><span class="t" style="left:712.50px;top:1015.00px;letter-spacing:0.699px;color:#9d9ca2;">opticalSize</span><span class="t" style="left:713.50px;top:1073.00px;letter-spacing:0.663px;color:#9d9ca2;">shadows</span><span class="t" style="left:713.50px;top:1131.00px;letter-spacing:0.765px;color:#9d9ca2;">semanticLabel</span><span class="t m" style="left:1310.00px;top:605.50px;letter-spacing:0.066px;color:#d3d2d7;">IconData(U+0E260)</span><span class="t m" style="left:1253.50px;top:670.50px;letter-spacing:0.431px;color:#d3d2d7;">24.0</span><span class="t m" style="left:1291.25px;top:728.00px;letter-spacing:0.004px;color:#d3d2d7;">#80ffffff</span><span class="t m" style="left:1253.00px;top:786.50px;letter-spacing:0.127px;color:#d3d2d7;">[Directionality, IconTheme]</span><span class="t" style="left:1270.25px;top:840.75px;letter-spacing:0.810px;color:#2d3043;">default</span><span class="t m" style="left:1379.25px;top:844.00px;letter-spacing:0.181px;color:#d3d2d7;">null</span><span class="t" style="left:1270.25px;top:898.75px;letter-spacing:0.810px;color:#2d3043;">default</span><span class="t m" style="left:1379.25px;top:902.00px;letter-spacing:0.181px;color:#d3d2d7;">null</span><span class="t" style="left:1270.25px;top:956.75px;letter-spacing:0.810px;color:#2d3043;">default</span><span class="t m" style="left:1379.25px;top:960.00px;letter-spacing:0.181px;color:#d3d2d7;">null</span><span class="t" style="left:1270.25px;top:1014.75px;letter-spacing:0.810px;color:#2d3043;">default</span><span class="t m" style="left:1379.25px;top:1018.00px;letter-spacing:0.181px;color:#d3d2d7;">null</span><span class="t" style="left:1270.25px;top:1072.75px;letter-spacing:0.810px;color:#2d3043;">default</span><span class="t m" style="left:1379.25px;top:1076.00px;letter-spacing:0.181px;color:#d3d2d7;">null</span><span class="t" style="left:1270.25px;top:1130.75px;letter-spacing:0.810px;color:#2d3043;">default</span><span class="t m" style="left:1379.25px;top:1134.00px;letter-spacing:0.181px;color:#d3d2d7;">null</span></section>
<section id="console"><svg class="ic" style="left:2198.25px;top:1218px" width="28.5" height="28.5" viewBox="0 0 24 24"><path fill="#cac9ce" d="M11 18h2v-2h-2v2zm1-16C6.48 2 2 6.48 2 12s4.48 10 10 10 10-4.48 10-10S17.52 2 12 2zm0 18c-4.41 0-8-3.59-8-8s3.59-8 8-8 8 3.59 8 8-3.59 8-8 8zm0-14c-2.21 0-4 1.79-4 4h2c0-1.1.9-2 2-2s2 .9 2 2c0 2-3 1.75-3 5h2c0-2.25 3-2.5 3-5 0-2.21-1.79-4-4-4z"/></svg><svg class="ic" style="left:2241.5px;top:1218px" width="29" height="29" viewBox="0 0 24 24"><path fill="#cac9ce" d="M16 1H4c-1.1 0-2 .9-2 2v14h2V3h12V1zm3 4H8c-1.1 0-2 .9-2 2v14c0 1.1.9 2 2 2h11c1.1 0 2-.9 2-2V7c0-1.1-.9-2-2-2zm0 16H8V7h11v14z"/></svg><svg class="ic" style="left:2285.25px;top:1217.5px" width="29.5" height="29.5" viewBox="0 0 24 24"><path fill="#cac9ce" d="M6 19c0 1.1.9 2 2 2h8c1.1 0 2-.9 2-2V7H6v12zM19 4h-3.5l-1-1h-5l-1 1H5v2h14V4z"/></svg><div class="a" style="left:28px;top:1258px;width:2298px;height:4px;background:#39393d;"></div><div class="a" style="left:2306px;top:1287px;width:16px;height:96px;background:#4e4d53;border-radius:8px;"></div><div class="a" id="cons" style="left:28px;top:1262px;width:2298px;height:267.5px;overflow:hidden"><div class="a" style="left:-28px;top:0"><svg class="ic" style="left:60.2px;top:9.5px" width="28" height="28" viewBox="0 0 24 24"><path fill="none" stroke="#e6e5ea" stroke-width="2.4" stroke-linecap="butt" stroke-linejoin="miter" d="M6.500 9.200l5.500 5.500 5.500-5.500"/></svg><svg class="ic" style="left:86.1px;top:7.4px" width="32" height="32" viewBox="0 0 24 24"><path fill="#cac9ce" d="M21 19V5c0-1.1-.9-2-2-2H5c-1.1 0-2 .9-2 2v14c0 1.1.9 2 2 2h14c1.1 0 2-.9 2-2zM8.5 13.5l2.5 3.01L14.5 12l4.5 6H5l3.5-4.5z"/></svg><svg class="ic" style="left:82.5px;top:49.5px" width="28" height="28" viewBox="0 0 24 24"><path fill="none" stroke="#e6e5ea" stroke-width="2.4" stroke-linecap="butt" stroke-linejoin="miter" d="M9.200 6.500l5.500 5.500-5.500 5.500"/></svg><svg class="ic" style="left:112.1px;top:42.6px" width="48" height="48" viewBox="0 0 24 24"><path fill="#cbcacf" d="M20 2H4c-1.1 0-1.99.9-1.99 2L2 22l4-4h14c1.1 0 2-.9 2-2V4c0-1.1-.9-2-2-2zm-7 12h-2v-2h2v2zm0-4h-2V6h2v4z"/></svg><div class="a" style="left:283px;top:126px;width:110.25px;height:34.5px;border-radius:17.25px;background:#c3c6dd"></div><div class="a" style="left:312.5px;top:166px;width:110.25px;height:34.5px;border-radius:17.25px;background:#c3c6dd"></div><div class="a" style="left:297.5px;top:206px;width:110.25px;height:34.5px;border-radius:17.25px;background:#c3c6dd"></div><div class="a" style="left:387px;top:246px;width:110.25px;height:34.5px;border-radius:17.25px;background:#c3c6dd"></div><span class="t m" style="left:124.75px;top:11.50px;letter-spacing:0.514px;font-weight:700;">Icon</span><span class="t m" style="left:167.50px;top:52.00px;letter-spacing:0.613px;color:#d3d2d7;">IconData(U+0E260)</span><span class="t m" style="left:112.25px;top:93.25px;letter-spacing:1.123px;color:#d3d2d7;">size:</span><span class="t m" style="left:203.15px;top:92.25px;letter-spacing:0.164px;color:#8e8d93;">24.0</span><span class="t m" style="left:112.25px;top:133.25px;letter-spacing:1.123px;color:#d3d2d7;">fill:</span><span class="t m" style="left:202.15px;top:132.25px;letter-spacing:0.164px;color:#8e8d93;">null</span><span class="t" style="left:299.00px;top:131.50px;letter-spacing:0.810px;color:#2d3043;">default</span><span class="t m" style="left:113.25px;top:173.25px;letter-spacing:0.748px;color:#d3d2d7;">weight:</span><span class="t m" style="left:231.95px;top:172.25px;letter-spacing:0.164px;color:#8e8d93;">null</span><span class="t" style="left:328.50px;top:171.50px;letter-spacing:0.810px;color:#2d3043;">default</span><span class="t m" style="left:112.25px;top:213.25px;letter-spacing:0.998px;color:#d3d2d7;">grade:</span><span class="t m" style="left:217.05px;top:212.25px;letter-spacing:0.164px;color:#8e8d93;">null</span><span class="t" style="left:313.50px;top:211.50px;letter-spacing:0.810px;color:#2d3043;">default</span><span class="t m" style="left:112.25px;top:253.25px;letter-spacing:0.725px;color:#d3d2d7;">opticalSize:</span><span class="t m" style="left:306.45px;top:252.25px;letter-spacing:0.164px;color:#8e8d93;">null</span><span class="t" style="left:403.00px;top:251.50px;letter-spacing:0.810px;color:#2d3043;">default</span></div></div><span class="t" style="left:51.50px;top:1219.90px;letter-spacing:0.929px;-webkit-text-stroke:1.3px #cac9ce;font-size:23.2px;line-height:23.2px;">Console</span></section>
<footer id="statusbar"><div class="a" style="left:0px;top:1560px;width:2358px;height:2px;background:#3b3d49;"></div><div class="a" style="left:0px;top:1562px;width:2358px;height:50px;background:#b1c5ff;border-radius:0 0 9px 3px;"></div><svg class="ic" style="left:20px;top:1576.5px" width="25" height="25" viewBox="0 0 25 25"><rect x="6.200" y="1.500" width="16.600" height="17" rx="3" fill="none" stroke="#0b2a66" stroke-width="2"/><path fill="none" stroke="#0b2a66" stroke-width="2" d="M1.300 5.500v15.700a2 2 0 0 0 2 2H19M10 7.200h9M10 11h9M10 14.500h4"/></svg><svg class="ic" style="left:215px;top:1578px" width="27" height="22" viewBox="0 0 27 22"><rect x="1.700" y="1.900" width="23" height="15.800" rx="2.500" fill="none" stroke="#0b2a66" stroke-width="2.300"/><path fill="#0b2a66" d="M9 18.800h9v1.600a1 1 0 0 1-1 1h-7a1 1 0 0 1-1-1zM10 5.900l7 3.900-7 3.900z"/></svg><span class="t" style="left:53.50px;top:1573.00px;letter-spacing:0.318px;font-size:23px;line-height:23px;color:#0b2a66;text-decoration:underline;text-decoration-thickness:1.8px;text-underline-offset:1.2px;">Read docs</span><span class="t" style="left:187.60px;top:1581.40px;letter-spacing:0.000px;font-size:18px;line-height:18px;color:#0b2a66;">•</span><span class="t" style="left:250.75px;top:1573.00px;letter-spacing:0.720px;font-size:23px;line-height:23px;color:#0b2a66;text-decoration:underline;text-decoration-thickness:1.8px;text-underline-offset:1.2px;">Watch tutorial</span><span class="t" style="left:1240.10px;top:1580.75px;letter-spacing:0.000px;font-size:16.5px;line-height:16.5px;color:#0b2a66;">•</span><span class="t" style="left:2127.00px;top:1578.00px;letter-spacing:1.136px;font-size:23px;line-height:23px;color:#0b2a66;">x64 (64 bit) macos</span></footer>
</div></body></html>
